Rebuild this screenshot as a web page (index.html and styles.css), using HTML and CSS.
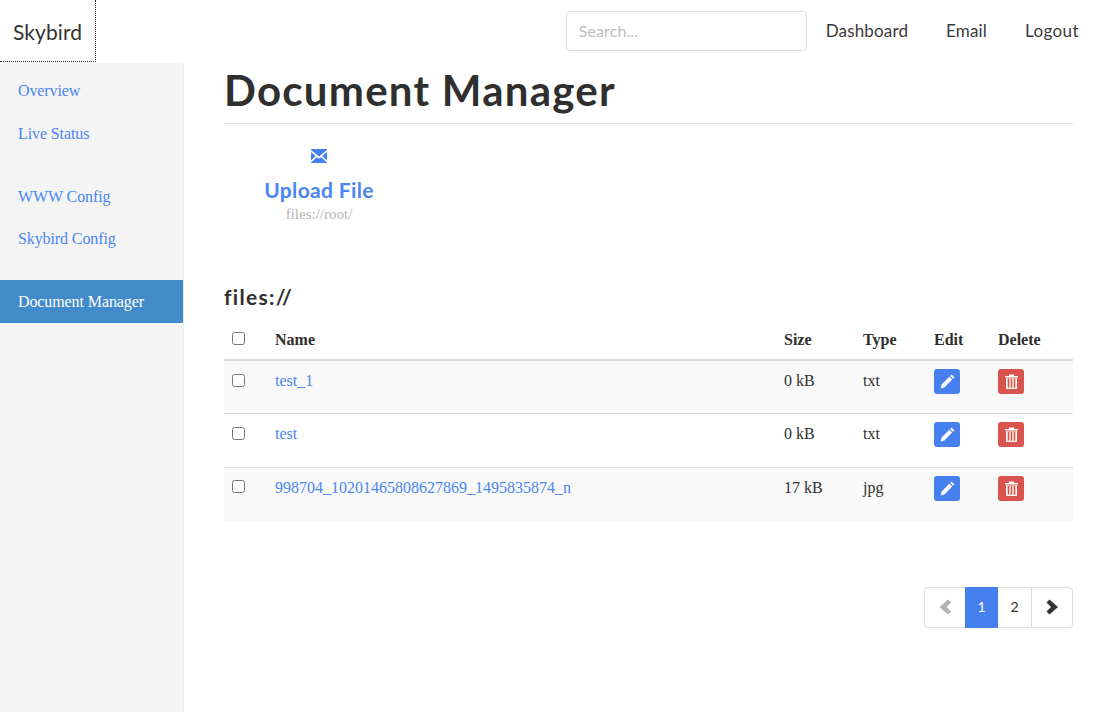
FILE: index.html
```html
<!DOCTYPE html>
<html lang="en">
<head>
<meta charset="utf-8">
<title>Skybird</title>
<link rel="stylesheet" href="styles.css">
</head>
<body>
<nav class="navbar">
  <a class="brand" href="#">Skybird</a>
  <div class="nav-right">
    <input class="search" type="text" placeholder="Search...">
    <a class="nav-link" href="#">Dashboard</a>
    <a class="nav-link" href="#">Email</a>
    <a class="nav-link" href="#">Logout</a>
  </div>
</nav>
<div class="layout">
  <aside class="sidebar">
    <ul class="side-group">
      <li><a href="#">Overview</a></li>
      <li><a href="#">Live Status</a></li>
    </ul>
    <ul class="side-group">
      <li><a href="#">WWW Config</a></li>
      <li><a href="#">Skybird Config</a></li>
    </ul>
    <ul class="side-group">
      <li class="active"><a href="#">Document Manager</a></li>
    </ul>
  </aside>
  <main class="main">
    <h1 class="page-title">Document Manager</h1>
    <div class="upload">
      <svg class="upload-icon" viewBox="0 0 16 14" width="16" height="14" aria-hidden="true">
        <path d="M0 0H16V1L8 7.6L0 1Z M0 3V11.6L4.8 7Z M16 3V11.6L11.2 7Z M0 14V13.4L6 8.2L8 9.8L10 8.2L16 13.4V14Z" fill="#4680ee"/>
      </svg>
      <a class="upload-title" href="#">Upload File</a>
      <span class="upload-path">files://root/</span>
    </div>
    <h2 class="section-title">files://</h2>
    <table class="files">
      <thead>
        <tr>
          <th class="col-check"><input type="checkbox"></th>
          <th class="col-name">Name</th>
          <th class="col-size">Size</th>
          <th class="col-type">Type</th>
          <th class="col-edit">Edit</th>
          <th class="col-del">Delete</th>
        </tr>
      </thead>
      <tbody>
        <tr class="odd">
          <td><input type="checkbox"></td>
          <td><a href="#">test_1</a></td>
          <td>0 kB</td>
          <td>txt</td>
          <td><a class="btn btn-edit" href="#"><svg viewBox="0 0 15 15" width="15" height="15" aria-hidden="true"><path d="M11.6 0.6L14.4 3.4L13 4.8L10.2 2Z M9.4 2.8L12.2 5.6L4.4 13.4L0.6 14.4L1.6 10.6Z" fill="#fff"/></svg></a></td>
          <td><a class="btn btn-del" href="#"><svg viewBox="0 0 13 15" width="13" height="15" aria-hidden="true"><path d="M4 2V0.5H9V2H13V3.4H0V2Z" fill="#fff"/><path d="M1.5 4.2V14.5H11.5V4.2" fill="#f6c9b8" stroke="#fff"/><path d="M3.5 5V13.5M6.5 5V13.5M9.5 5V13.5" stroke="#d9534f" stroke-width="1"/></svg></a></td>
        </tr>
        <tr>
          <td><input type="checkbox"></td>
          <td><a href="#">test</a></td>
          <td>0 kB</td>
          <td>txt</td>
          <td><a class="btn btn-edit" href="#"><svg viewBox="0 0 15 15" width="15" height="15" aria-hidden="true"><path d="M11.6 0.6L14.4 3.4L13 4.8L10.2 2Z M9.4 2.8L12.2 5.6L4.4 13.4L0.6 14.4L1.6 10.6Z" fill="#fff"/></svg></a></td>
          <td><a class="btn btn-del" href="#"><svg viewBox="0 0 13 15" width="13" height="15" aria-hidden="true"><path d="M4 2V0.5H9V2H13V3.4H0V2Z" fill="#fff"/><path d="M1.5 4.2V14.5H11.5V4.2" fill="#f6c9b8" stroke="#fff"/><path d="M3.5 5V13.5M6.5 5V13.5M9.5 5V13.5" stroke="#d9534f" stroke-width="1"/></svg></a></td>
        </tr>
        <tr class="odd">
          <td><input type="checkbox"></td>
          <td><a href="#">998704_10201465808627869_1495835874_n</a></td>
          <td>17 kB</td>
          <td>jpg</td>
          <td><a class="btn btn-edit" href="#"><svg viewBox="0 0 15 15" width="15" height="15" aria-hidden="true"><path d="M11.6 0.6L14.4 3.4L13 4.8L10.2 2Z M9.4 2.8L12.2 5.6L4.4 13.4L0.6 14.4L1.6 10.6Z" fill="#fff"/></svg></a></td>
          <td><a class="btn btn-del" href="#"><svg viewBox="0 0 13 15" width="13" height="15" aria-hidden="true"><path d="M4 2V0.5H9V2H13V3.4H0V2Z" fill="#fff"/><path d="M1.5 4.2V14.5H11.5V4.2" fill="#f6c9b8" stroke="#fff"/><path d="M3.5 5V13.5M6.5 5V13.5M9.5 5V13.5" stroke="#d9534f" stroke-width="1"/></svg></a></td>
        </tr>
      </tbody>
    </table>
    <div class="pager-row">
      <ul class="pager">
        <li class="disabled"><a href="#"><svg viewBox="0 0 13 16" width="13" height="16" aria-hidden="true"><path d="M9 0.5L12 3.5L7.5 8L12 12.5L9 15.5L0.5 8Z" fill="#b3b3b3"/></svg></a></li>
        <li class="current"><a href="#">1</a></li>
        <li><a href="#">2</a></li>
        <li><a href="#"><svg viewBox="0 0 13 16" width="13" height="16" aria-hidden="true"><path d="M3.5 0.5L0.5 3.5L5 8L0.5 12.5L3.5 15.5L12 8Z" fill="#333"/></svg></a></li>
      </ul>
    </div>
  </main>
</div>
</body>
</html>
```

FILE: styles.css
```css
* { box-sizing: border-box; }
html, body { height: 100%; }
body {
  margin: 0;
  background: #fff;
  color: #2f2f2f;
  font-family: "Liberation Serif", "Times New Roman", serif;
  font-size: 16px;
  line-height: 1.43;
}
a { color: #4a86f0; text-decoration: none; }
ul { list-style: none; margin: 0; padding: 0; }

.navbar {
  display: flex;
  justify-content: space-between;
  align-items: flex-start;
  height: 63px;
  font-family: Lato, "Liberation Sans", sans-serif;
}
.brand {
  width: 96px;
  height: 62px;
  padding: 17px 0 0 13px;
  color: #333;
  font-size: 21px;
  letter-spacing: 0.1px;
  border-right: 1px dotted #222;
  border-bottom: 1px dotted #222;
}
.nav-right { display: flex; align-items: flex-start; padding: 11px 32px 0 0; }
.search {
  width: 241px;
  height: 40px;
  margin-right: 19px;
  padding: 0 12px 1px;
  border: 1px solid #ddd;
  border-radius: 4px;
  font: 16px Lato, "Liberation Sans", sans-serif;
  letter-spacing: 0.1px;
  color: #333;
}
.search::placeholder { color: #bbb; }
.nav-link {
  margin-right: 38px;
  padding-top: 8px;
  color: #3a3a3a;
  font-size: 17px;
  letter-spacing: 0.15px;
}
.nav-link:last-child { margin-right: 0; letter-spacing: 0.4px; }

.layout { display: flex; min-height: 649px; }
.sidebar {
  flex: 0 0 184px;
  padding-top: 6px;
  background: #f4f4f4;
  border-right: 1px solid #eaeaea;
}
.side-group { margin-bottom: 20px; }
.side-group li a { display: block; padding: 11px 18px 9px; line-height: 22.86px; letter-spacing: -0.1px; }
.side-group li:last-child a { padding: 10.7px 18px 9.3px; }
.side-group li.active a { padding: 10.6px 18px 9.4px; background: #428bca; color: #fff; }

.main { flex: 1; padding: 0 38px 0 40px; }
.page-title {
  margin: 0;
  height: 61px;
  padding-top: 1px;
  border-bottom: 1px solid #ddd;
  font: 700 42px/52px Lato, "Liberation Sans", sans-serif;
  letter-spacing: 1.25px;
  color: #2f2f2f;
}
.upload {
  display: flex;
  flex-direction: column;
  align-items: center;
  width: 190px;
  padding-top: 25px;
}
.upload-icon { display: block; margin-bottom: 12px; }
.upload-title { font: 700 21px/30px Lato, "Liberation Sans", sans-serif; letter-spacing: 0.35px; }
.upload-path { color: #b5b5b5; font-size: 15px; line-height: 16px; margin-top: 1px; }

.section-title {
  margin: 63px 0 0;
  height: 34px;
  font: 700 21px/24px Lato, "Liberation Sans", sans-serif;
  letter-spacing: 1.3px;
  color: #2f2f2f;
}
.files { width: 100%; border-collapse: collapse; table-layout: fixed; }
.files th { height: 41px; padding: 2px 8px 0; text-align: left; border-bottom: 2px solid #ddd; font-weight: 700; }
.files th input { position: relative; top: -2px; }
.files td { height: 53.5px; padding: 8px; vertical-align: top; line-height: 23px; border-top: 1px solid #ddd; }
.files tbody tr:first-child td { border-top: 0; }
.files .odd td { background: #f9f9f9; }
.files input { margin: 0; width: 13px; height: 13px; vertical-align: middle; }
.files td input { position: relative; top: -2px; }
.col-check { width: 43px; }
.col-name { width: 509px; }
.col-size { width: 79px; }
.col-type { width: 71px; }
.col-edit { width: 64px; }
.btn {
  display: flex;
  align-items: center;
  justify-content: center;
  width: 26px;
  height: 25px;
  border-radius: 3px;
}
.btn-edit { background: #4680ee; }
.btn-del { background: #d9534f; }

.pager-row { display: flex; justify-content: flex-end; margin-top: 66px; }
.pager { display: flex; height: 41px; border: 1px solid #ddd; border-radius: 4px; font-family: Lato, "Liberation Sans", sans-serif; font-size: 14px; }
.pager li { display: flex; }
.pager a { display: flex; align-items: center; justify-content: center; color: #333; width: 33px; }
.pager li:first-child a { width: 40px; }
.pager li:last-child { border-left: 1px solid #ddd; }
.pager li:last-child a { width: 40px; }
.pager .current { margin: -1px 0; }
.pager .current a { background: #4680ee; color: #fff; }
```
